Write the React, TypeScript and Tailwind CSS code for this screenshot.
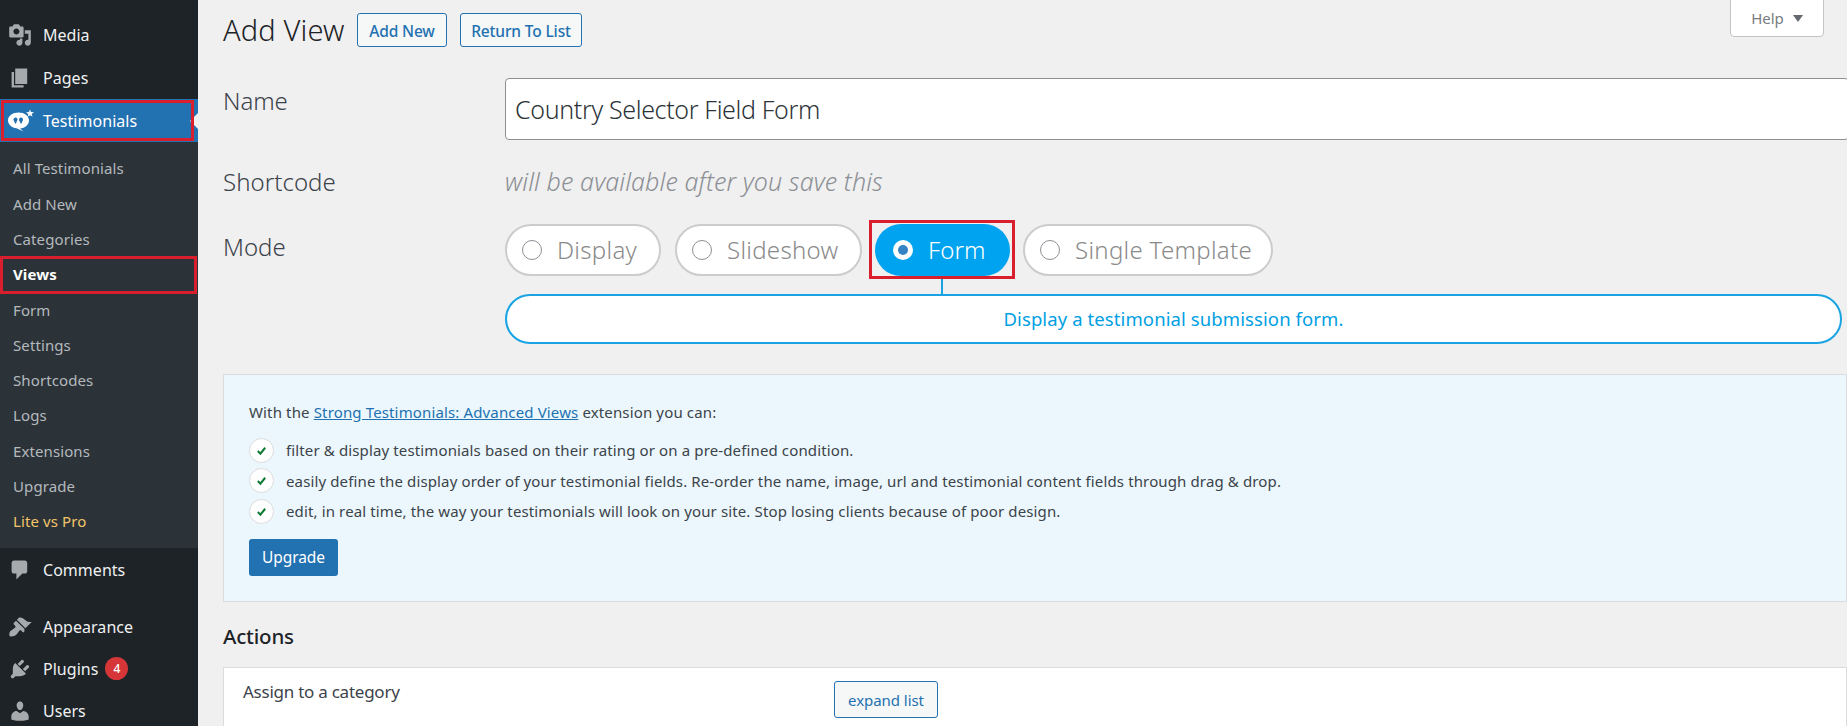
import React from "react";

const F = "font-['Noto_Sans','Open_Sans',sans-serif]";

const paths: Record<string, string> = {
  media: "M13 11V4c0-.55-.45-1-1-1h-1.67L9 1H5L3.67 3H2c-.55 0-1 .45-1 1v7c0 .55.45 1 1 1h10c.55 0 1-.45 1-1zM7 4.5c1.38 0 2.5 1.12 2.5 2.5S8.38 9.5 7 9.5 4.5 8.38 4.5 7 5.62 4.5 7 4.5zM14 6h5v10.5c0 1.38-1.12 2.5-2.5 2.5S14 17.88 14 16.5s1.12-2.5 2.5-2.5c.17 0 .34.02.5.05V9h-3V6zm-4 8.05V13h2v3.5c0 1.38-1.12 2.5-2.5 2.5S7 17.88 7 16.5 8.12 14 9.5 14c.17 0 .34.02.5.05z",
  pages: "M6 15V2h10v13H6zm-1 1h8v2H3V5h2v11z",
  comments: "M5 2h9c1.1 0 2 .9 2 2v7c0 1.1-.9 2-2 2h-2l-5 5v-5H5c-1.1 0-2-.9-2-2V4c0-1.1.9-2 2-2z",
  appearance: "M14.48 11.06L7.41 3.99l1.5-1.5c.5-.56 2.3-.47 3.51.32 1.21.8 1.43 1.28 2.91 2.1 1.18.64 2.45 1.26 4.45.85zm-.71.71L6.7 4.7 4.93 6.47c-.39.39-.39 1.02 0 1.41l1.06 1.06c.39.39.39 1.03 0 1.42-.6.6-1.43 1.11-2.21 1.69-.35.26-.7.53-1.01.84C1.43 13.23.5 16.5 1.5 17.5s4.27.07 5.61-1.27c.31-.31.58-.66.84-1.01.58-.78 1.09-1.61 1.69-2.21.39-.39 1.03-.39 1.42 0l1.06 1.06c.39.39 1.02.39 1.41 0z",
  plugins: "M13.11 4.36L9.87 7.6 8 5.73l3.24-3.24c.35-.34 1.05-.2 1.56.32.52.51.66 1.21.31 1.55zm-8 1.77l.91-1.12 9.01 9.01-1.19.84c-.71.71-2.63 1.16-3.82 1.16H6.14L4.9 17.26c-.59.59-1.54.59-2.12 0-.59-.58-.59-1.53 0-2.12l1.24-1.24v-3.88c0-1.13.4-3.19 1.09-3.89zm7.26 3.97l3.24-3.24c.34-.35 1.04-.21 1.55.31.52.51.66 1.21.31 1.55l-3.24 3.25z",
  users: "M10 9.25c-2.27 0-2.73-3.44-2.73-3.44C7 4.02 7.82 2 9.97 2c2.16 0 2.98 2.02 2.71 3.81 0 0-.41 3.44-2.68 3.44zm0 2.57L12.72 10c2.39 0 4.52 2.33 4.52 4.53v2.49s-3.65 1.13-7.24 1.13c-3.65 0-7.24-1.13-7.24-1.13v-2.49c0-2.25 1.94-4.48 4.47-4.48z",
};

function Dash({ name }: { name: string }) {
  return (
    <svg viewBox="0 0 20 20" className="w-[24px] h-[24px] shrink-0 fill-[#a7aaad]">
      <path d={paths[name]} />
    </svg>
  );
}

function MenuItem({ icon, label, h, children }: { icon: string; label: string; h: string; children?: React.ReactNode }) {
  return (
    <div className={`flex items-center pl-[8px] ${h}`}>
      <Dash name={icon} />
      <span className="ml-[11px] text-[16px] tracking-[0.03px] text-[#f0f0f1]">{label}</span>
      {children}
    </div>
  );
}

function SubItem({ label, bold, gold }: { label: string; bold?: boolean; gold?: boolean }) {
  const color = gold ? "text-[#f2c468]" : bold ? "text-white font-bold" : "text-[#b4b9be]";
  return (
    <div className={`h-[35.3px] flex items-center pl-[13px] text-[15px] tracking-[0.1px] ${color}`}>{label}</div>
  );
}

function Sidebar() {
  return (
    <aside className="w-[198px] shrink-0 bg-[#1d2327] h-[726px] overflow-hidden">
      <div className="h-[13px]" />
      <MenuItem icon="media" label="Media" h="h-[43px]" />
      <MenuItem icon="pages" label="Pages" h="h-[43px]" />
      <div className="h-[43px] bg-[#2271b1] relative flex items-center pl-[7px]">
        <svg viewBox="0 0 27 23" className="w-[27px] h-[23px] shrink-0">
          <path d="M11.500 3.500c5.800 0 10.500 3.500 10.500 8 0 4.200-4 7.600-9 8l3.500 3-7-3.200C5 18.800 1 15.500 1 11.500c0-4.500 4.700-8 10.500-8z" fill="#fff" />
          <path d="M23 .500l1 2.500 3 .2-2.300 1.800.8 2.800L23 6.300l-2.500 1.500.8-2.800L19 3.200l3-.2z" fill="#fff" />
          <circle cx="8.500" cy="10.500" r="2" fill="#2271b1" />
          <circle cx="14" cy="10.500" r="2" fill="#2271b1" />
          <path d="M6.800 11l1.200 3.500h1l1.200-3.500zM12.300 11l1.200 3.500h1l1.200-3.500z" fill="#2271b1" />
        </svg>
        <span className="ml-[9px] text-[16px] tracking-[0.03px] text-white">Testimonials</span>
        <span className="absolute right-0 top-[14px] w-0 h-0 border-y-[8px] border-y-transparent border-r-[8px] border-r-[#f0f0f1]" />
        <span className="absolute left-[1px] top-[1px] w-[193px] h-[41px] border-[3px] border-[#d91f2e]" />
      </div>
      <div className="bg-[#2c3338] h-[406px] pt-[9px]">
        <SubItem label="All Testimonials" />
        <SubItem label="Add New" />
        <SubItem label="Categories" />
        <div className="relative">
          <SubItem label="Views" bold />
          <span className="absolute left-0 top-[-1px] w-[197px] h-[38px] border-[3px] border-[#d91f2e]" />
        </div>
        <SubItem label="Form" />
        <SubItem label="Settings" />
        <SubItem label="Shortcodes" />
        <SubItem label="Logs" />
        <SubItem label="Extensions" />
        <SubItem label="Upgrade" />
        <SubItem label="Lite vs Pro" gold />
      </div>
      <MenuItem icon="comments" label="Comments" h="h-[43px]" />
      <div className="h-[15px]" />
      <MenuItem icon="appearance" label="Appearance" h="h-[42px]" />
      <MenuItem icon="plugins" label="Plugins" h="h-[41px]">
        <span className="ml-[7px] w-[23px] h-[23px] rounded-full bg-[#d63638] text-white text-[12px] font-medium flex items-center justify-center">4</span>
      </MenuItem>
      <MenuItem icon="users" label="Users" h="h-[43px]" />
    </aside>
  );
}

function SmallBtn({ children, w }: { children: React.ReactNode; w: string }) {
  return (
    <span className={`h-[34px] ${w} border border-[#2271b1] rounded-[3px] bg-[#f6f7f7] text-[#2271b1] text-[15.500px] font-medium tracking-[-0.15px] pt-[4px] flex items-center justify-center`}>
      {children}
    </span>
  );
}

function Radio({ checked }: { checked?: boolean }) {
  if (checked)
    return (
      <span className="w-[20px] h-[20px] rounded-full bg-white flex items-center justify-center">
        <span className="w-[10px] h-[10px] rounded-full bg-[#3582c4]" />
      </span>
    );
  return <span className="w-[20px] h-[20px] rounded-full bg-white border border-[#8c8f94]" />;
}

function Pill({ label, w }: { label: string; w: string }) {
  return (
    <div className={`h-[52px] ${w} shrink-0 rounded-[26px] border-2 border-[#cccccc] bg-white flex items-center pl-[15px] text-[#8a8a8a] text-[24px] font-[350] tracking-[0.3px]`}>
      <Radio />
      <span className="ml-[15px]">{label}</span>
    </div>
  );
}

function Check({ text }: { text: string }) {
  return (
    <div className="h-[30.500px] flex items-center">
      <span className="w-[25px] h-[25px] rounded-full bg-white border border-[#dcdcde] flex items-center justify-center shrink-0">
        <svg viewBox="0 0 12 12" className="w-[11px] h-[11px]">
          <path d="M2 6.500l2.800 3L10 3" fill="none" stroke="#0f7a34" strokeWidth="2.200" />
        </svg>
      </span>
      <span className="ml-[12px] text-[15px] tracking-[0.13px] text-[#3c434a] whitespace-nowrap">{text}</span>
    </div>
  );
}

export default function App() {
  return (
    <div className={`w-[1847px] h-[726px] overflow-hidden flex bg-[#f0f0f1] ${F}`}>
      <Sidebar />
      <main className="flex-1 min-w-0 pl-[25px] relative">
        <div className="absolute right-[23px] top-[-1px] w-[94px] h-[38px] bg-white border border-[#c3c4c7] rounded-b-[4px] flex items-center justify-center text-[#787c82] text-[15px]">
          Help
          <span className="ml-[9px] w-0 h-0 border-x-[5px] border-x-transparent border-t-[7px] border-t-[#646970]" />
        </div>

        <div className="pt-[13px] flex items-center">
          <h1 className="w-[134px] text-[29px] font-[350] leading-[34px] text-[#1d2327] tracking-[0.15px]">Add View</h1>
          <SmallBtn w="w-[90px]">Add New</SmallBtn>
          <span className="w-[13px]" />
          <SmallBtn w="w-[122px]">Return To List</SmallBtn>
        </div>

        <div className="mt-[31px] flex">
          <div className="w-[282px] shrink-0 text-[24px] font-[350] leading-[46px] text-[#3c434a] tracking-[-0.1px]">Name</div>
          <div className="flex-1 mr-[-2px] h-[62px] bg-white border border-[#8c8f94] rounded-[4px] flex items-center pl-[9px] pt-[2px] text-[#2c3338] text-[25px] font-[350] tracking-[-0.35px]">
            Country Selector Field Form
          </div>
        </div>

        <div className="mt-[27px] flex h-[30px] items-center">
          <div className="w-[282px] shrink-0 text-[24px] font-[350] text-[#3c434a] tracking-[0.05px]">Shortcode</div>
          <div className="text-[25px] font-[350] italic text-[#8c8f94] tracking-[0.09px]">will be available after you save this</div>
        </div>

        <div className="mt-[27px] flex">
          <div className="w-[282px] shrink-0 text-[24px] font-[350] leading-[46px] text-[#3c434a] tracking-[0px]">Mode</div>
          <div className="flex items-center">
            <Pill label="Display" w="w-[156px]" />
            <span className="w-[14px]" />
            <Pill label="Slideshow" w="w-[187px]" />
            <span className="w-[13px]" />
            <div className="relative h-[52px] w-[135px] shrink-0 rounded-[26px] bg-[#00a3ef] flex items-center pl-[18px] text-white text-[24px] font-[350] tracking-[0.1px]">
              <Radio checked />
              <span className="ml-[15px]">Form</span>
              <span className="absolute left-[-6px] top-[-4px] w-[146px] h-[59px] border-[3px] border-[#d91f2e]" />
            </div>
            <span className="w-[13px]" />
            <Pill label="Single Template" w="w-[250px]" />
          </div>
        </div>

        <div className="mt-[18px] ml-[282px] mr-[5px] h-[50px] relative rounded-[25px] border-2 border-[#19a3e2] bg-white flex items-center justify-center text-[#00a0e3] text-[18.500px] tracking-[0.1px]">
          Display a testimonial submission form.
          <span className="absolute left-[434px] top-[-17px] w-[2px] h-[16px] bg-[#19a3e2]" />
        </div>

        <div className="mt-[30px] h-[228px] border border-[#dcdcde] bg-[#ebf7fc] pl-[25px] pt-[25px]">
          <p className="text-[15px] leading-[24px] tracking-[0.14px] text-[#3c434a]">
            With the <span className="text-[#2271b1] underline">Strong Testimonials: Advanced Views</span> extension you can:
          </p>
          <div className="mt-[11px]">
            <Check text="filter & display testimonials based on their rating or on a pre-defined condition." />
            <Check text="easily define the display order of your testimonial fields. Re-order the name, image, url and testimonial content fields through drag & drop." />
            <Check text="edit, in real time, the way your testimonials will look on your site. Stop losing clients because of poor design." />
          </div>
          <div className="mt-[12px] w-[89px] h-[37px] rounded-[3px] bg-[#2271b1] text-white text-[15.500px] pt-[2px] flex items-center justify-center tracking-[-0.1px]">
            Upgrade
          </div>
        </div>

        <h2 className="mt-[19px] text-[20.500px] leading-[30px] font-medium text-[#1d2327] tracking-[-0.2px]">Actions</h2>

        <div className="mt-[16px] h-[80px] bg-white border border-[#dcdcde] flex pl-[19px]">
          <div className="w-[591px] pt-[11px] text-[17px] leading-[26px] text-[#3c434a] tracking-[-0.25px]">Assign to a category</div>
          <div className="mt-[13px] w-[104px] h-[37px] border border-[#2271b1] rounded-[3px] bg-[#f6f7f7] text-[#2271b1] text-[15px] pt-[2px] flex items-center justify-center tracking-[-0.05px]">
            expand list
          </div>
        </div>
      </main>
    </div>
  );
}
